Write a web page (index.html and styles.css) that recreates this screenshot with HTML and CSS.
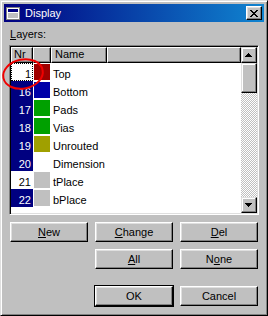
FILE: index.html
```html
<!DOCTYPE html>
<html>
<head>
<meta charset="utf-8">
<link rel="stylesheet" href="styles.css">
</head>
<body>
<div class="window">
  <div class="titlebar">
    <svg class="app-icon" width="14" height="13" viewBox="0 0 14 13">
      <rect x="0" y="0" width="14" height="13" fill="#dfdfdf"/>
      <rect x="0.5" y="0.5" width="13" height="12" fill="none" stroke="#808080"/>
      <rect x="1" y="1" width="12" height="11" fill="#fff"/>
      <rect x="2" y="2" width="10" height="3" fill="#000080"/>
      <rect x="2" y="6" width="10" height="5" fill="#c0c0c0"/>
    </svg>
    <span class="title">Display</span>
    <div class="close">
      <svg width="8" height="7" viewBox="0 0 8 7">
        <path d="M0 0h2v1H0zM6 0h2v1H6zM1 1h2v1H1zM5 1h2v1H5zM2 2h4v1H2zM3 3h2v1H3zM2 4h4v1H2zM1 5h2v1H1zM5 5h2v1H5zM0 6h2v1H0zM6 6h2v1H6z" fill="#000"/>
      </svg>
    </div>
  </div>

  <div class="label"><u>L</u>ayers:</div>

  <div class="listbox">
    <div class="list">
      <div class="header">
        <div class="hcell c-nr">Nr</div>
        <div class="hcell c-sw"></div>
        <div class="hcell c-name">Name</div>
        <div class="hcell c-rest"></div>
      </div>
      <div class="row">
        <div class="nr focus">1</div>
        <div class="sw"><span class="swatch" style="background:#a00000"></span></div>
        <div class="name">Top</div>
      </div>
      <div class="row">
        <div class="nr on">16</div>
        <div class="sw"><span class="swatch" style="background:#0000a8"></span></div>
        <div class="name">Bottom</div>
      </div>
      <div class="row">
        <div class="nr on">17</div>
        <div class="sw"><span class="swatch" style="background:#00a000"></span></div>
        <div class="name">Pads</div>
      </div>
      <div class="row">
        <div class="nr on">18</div>
        <div class="sw"><span class="swatch" style="background:#00a000"></span></div>
        <div class="name">Vias</div>
      </div>
      <div class="row">
        <div class="nr on">19</div>
        <div class="sw"><span class="swatch" style="background:#a0a000"></span></div>
        <div class="name">Unrouted</div>
      </div>
      <div class="row">
        <div class="nr on">20</div>
        <div class="sw"></div>
        <div class="name">Dimension</div>
      </div>
      <div class="row">
        <div class="nr">21</div>
        <div class="sw"><span class="swatch" style="background:#c0c0c0"></span></div>
        <div class="name">tPlace</div>
      </div>
      <div class="row">
        <div class="nr on">22</div>
        <div class="sw"><span class="swatch" style="background:#c0c0c0"></span></div>
        <div class="name">bPlace</div>
      </div>
      <div class="row">
        <div class="nr">23</div>
        <div class="sw"></div>
        <div class="name">tOrigins</div>
      </div>
    </div>
    <div class="scrollbar">
      <div class="sbtn">
        <svg width="7" height="4" viewBox="0 0 7 4"><path d="M3 0h1v1h1v1h1v1h1v1H0V3h1V2h1V1h1z" fill="#000"/></svg>
      </div>
      <div class="thumb"></div>
      <div class="track"></div>
      <div class="sbtn">
        <svg width="7" height="4" viewBox="0 0 7 4"><path d="M0 0h7v1H6v1H5v1H4v1H3V3H2V2H1V1H0z" fill="#000"/></svg>
      </div>
    </div>
  </div>

  <div class="buttons">
    <button class="btn"><u>N</u>ew</button>
    <button class="btn"><u>C</u>hange</button>
    <button class="btn"><u>D</u>el</button>
    <button class="btn col2"><u>A</u>ll</button>
    <button class="btn">N<u>o</u>ne</button>
    <button class="btn col2 default last">OK</button>
    <button class="btn last">Cancel</button>
  </div>

  <svg class="annot" width="60" height="100" viewBox="0 0 60 100">
    <ellipse cx="23" cy="74" rx="20" ry="14.5" transform="rotate(-12 23 74)" fill="none" stroke="#f00000" stroke-width="2"/>
  </svg>
</div>
</body>
</html>
```

FILE: styles.css
```css
* { box-sizing: border-box; }
html, body { margin: 0; padding: 0; }
body {
  width: 268px;
  height: 316px;
  overflow: hidden;
  font-family: "Liberation Sans", Arial, sans-serif;
  font-size: 11px;
  color: #000;
  background: #c0c0c0;
}
.window {
  position: relative;
  width: 268px;
  height: 316px;
  background: #c0c0c0;
  border: 1px solid;
  border-color: #dfdfdf #000 #000 #dfdfdf;
  box-shadow: inset 1px 1px #fff, inset -1px -1px #808080;
  padding: 3px;
  display: flex;
  flex-direction: column;
}
.titlebar {
  height: 18px;
  flex: none;
  display: flex;
  align-items: center;
  padding: 0 2px;
  background: linear-gradient(to right, #000080, #1084d0);
  color: #fff;
}
.app-icon { flex: none; display: block; }
.title { margin-left: 5px; line-height: 18px; }
.close {
  margin-left: auto;
  width: 16px;
  height: 14px;
  display: flex;
  align-items: center;
  justify-content: center;
  background: #c0c0c0;
  border: 1px solid;
  border-color: #fff #000 #000 #fff;
  box-shadow: inset -1px -1px #808080, inset 1px 1px #dfdfdf;
  padding-right: 1px;
}
.close svg { display: block; }
.label {
  margin: 6px 0 0 6px;
  line-height: 13px;
}
.listbox {
  margin: 4px 0 0 5px;
  width: 250px;
  height: 170px;
  flex: none;
  display: flex;
  border: 1px solid;
  border-color: #808080 #fff #fff #808080;
  padding: 1px;
  box-shadow: inset 1px 1px #000, inset -1px -1px #dfdfdf;
}
.list {
  width: 230px;
  height: 166px;
  overflow: hidden;
  background: #fff;
}
.header { display: flex; height: 16px; }
.hcell {
  height: 16px;
  background: #c0c0c0;
  border: 1px solid;
  border-color: #fff #000 #000 #fff;
  box-shadow: inset -1px -1px #808080;
  line-height: 12px;
  padding-left: 2px;
  white-space: nowrap;
  overflow: hidden;
}
.c-nr { width: 22px; }
.c-sw { width: 18px; }
.c-name { width: 56px; padding-left: 3px; }
.c-rest { flex: 1; }
.row { display: flex; height: 18px; }
.nr {
  width: 22px;
  height: 18px;
  text-align: right;
  padding: 2px 2px 0 0;
  line-height: 18px;
}
.nr.on { background: #000080; color: #fff; }
.nr.focus { border: 1px dotted #000; padding: 1px 1px 0 0; }
.sw { width: 18px; height: 18px; padding: 1px; }
.swatch { display: block; width: 16px; height: 16px; }
.name {
  padding: 2px 0 0 2px;
  line-height: 18px;
  height: 18px;
  white-space: nowrap;
}
.scrollbar {
  width: 16px;
  height: 166px;
  display: flex;
  flex-direction: column;
}
.sbtn, .thumb {
  background: #c0c0c0;
  border: 1px solid;
  border-color: #dfdfdf #000 #000 #dfdfdf;
  box-shadow: inset -1px -1px #808080, inset 1px 1px #fff;
}
.sbtn {
  height: 16px;
  display: flex;
  align-items: center;
  justify-content: center;
  padding-right: 1px;
}
.sbtn svg { display: block; }
.thumb { height: 30px; }
.track {
  flex: 1;
  background: repeating-conic-gradient(#c0c0c0 0 25%, #fff 0 50%) 0 0 / 2px 2px;
}
.buttons {
  margin: 7px 0 0 6px;
  display: grid;
  grid-template-columns: 78px 78px 78px;
  column-gap: 7px;
  row-gap: 7px;
}
.btn {
  height: 20px;
  margin: 0;
  padding: 0;
  font: inherit;
  color: #000;
  background: #c0c0c0;
  border: 1px solid;
  border-color: #fff #000 #000 #fff;
  box-shadow: inset -1px -1px #808080, inset 1px 1px #dfdfdf;
  line-height: 16px;
  text-align: center;
}
.col2 { grid-column: 2; }
.last { margin-top: 10px; }
.default { outline: 1px solid #000; }
.annot {
  position: absolute;
  left: -1px;
  top: -1px;
  pointer-events: none;
}
```
